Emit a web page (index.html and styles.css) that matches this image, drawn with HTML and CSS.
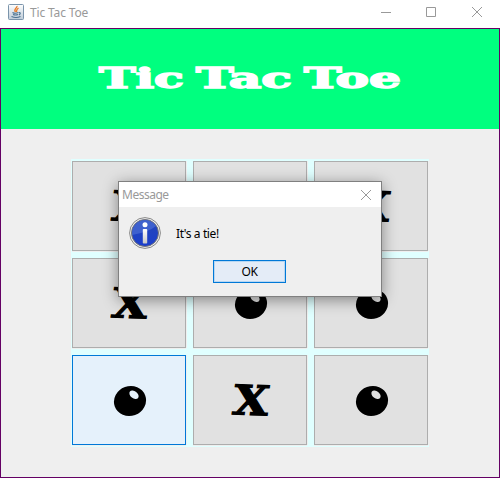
FILE: index.html
```
<!DOCTYPE html>
<html lang="en">
<head>
<meta charset="utf-8">
<title>Tic Tac Toe</title>
<link rel="stylesheet" href="styles.css">
</head>
<body>
<svg width="0" height="0" class="defs">
  <defs>
    <symbol id="mark-x" viewBox="0 0 40 36">
      <text class="x-text" x="1" y="32" textLength="36" lengthAdjust="spacingAndGlyphs" transform="translate(3 0) skewX(-6) rotate(2 20 18)">X</text>
    </symbol>
    <symbol id="mark-o" viewBox="0 0 40 36">
      <ellipse cx="20" cy="18" rx="16.2" ry="14.8" transform="rotate(-20 20 18)"/>
      <ellipse class="glint" cx="24" cy="11.8" rx="5.2" ry="3.5" transform="rotate(38 24 11.8)"/>
    </symbol>
  </defs>
</svg>
<div class="window">
  <header class="titlebar">
    <svg class="java" width="16" height="16" viewBox="0 0 16 16">
      <defs><linearGradient id="jb" x2="0" y2="1"><stop stop-color="#fff"/><stop offset="1" stop-color="#bdcbd8"/></linearGradient></defs>
      <rect x=".5" y=".5" width="15" height="15" rx="1" fill="url(#jb)" stroke="#7b94ab"/>
      <path d="M9 2C9.5 4 5 5 7.5 8M10.500 4C8 5.500 9 6 8.500 8" fill="none" stroke="#e87920" stroke-width="1.300"/>
      <path d="M4.500 8.500Q7 10 10.500 8.500M5 10.500Q7.500 11.500 10 10.500M11 8.500Q13.500 8.500 11 11M3.500 12.500Q8 14.500 12.500 12.500" fill="none" stroke="#4b7190" stroke-width="1.200"/>
    </svg>
    <span class="caption">Tic Tac Toe</span>
    <svg class="controls" width="102" height="12" viewBox="0 0 102 12" fill="none" stroke="#999">
      <path d="M0 6.500H10M45.500 1.500H54.500V10.500H45.500ZM91 1L101 11M101 1L91 11"/>
    </svg>
  </header>
  <main class="content">
    <div class="banner">
      <svg width="310" height="40" viewBox="0 0 310 40" class="heading">
        <text x="4" y="27" textLength="85" lengthAdjust="spacingAndGlyphs">Tic</text>
        <text x="101" y="27" textLength="96" lengthAdjust="spacingAndGlyphs">Tac</text>
        <text x="209" y="27" textLength="97" lengthAdjust="spacingAndGlyphs">Toe</text>
      </svg>
    </div>
    <div class="board">
      <button class="cell"><svg class="mark"><use href="#mark-x"/></svg></button>
      <button class="cell"></button>
      <button class="cell"><svg class="mark"><use href="#mark-x"/></svg></button>
      <button class="cell"><svg class="mark"><use href="#mark-x"/></svg></button>
      <button class="cell"><svg class="mark"><use href="#mark-o"/></svg></button>
      <button class="cell"><svg class="mark"><use href="#mark-o"/></svg></button>
      <button class="cell active"><svg class="mark"><use href="#mark-o"/></svg></button>
      <button class="cell"><svg class="mark"><use href="#mark-x"/></svg></button>
      <button class="cell"><svg class="mark"><use href="#mark-o"/></svg></button>
    </div>
  </main>
  <section class="dialog">
    <div class="dialog-title">
      <span>Message</span>
      <svg width="12" height="12" viewBox="0 0 12 12" stroke="#999"><path d="M1 1L11 11M11 1L1 11"/></svg>
    </div>
    <div class="message">
      <svg width="32" height="32" viewBox="0 0 32 32">
        <defs>
          <linearGradient id="ib" x2="0" y2="1"><stop stop-color="#2446b8"/><stop offset="1" stop-color="#1c3fcc"/></linearGradient>
          <linearGradient id="is" x2="0" y2="1"><stop stop-color="#fff"/><stop offset="1" stop-color="#c8c8c8"/></linearGradient>
        </defs>
        <circle cx="16" cy="16" r="15.400" fill="#eee" stroke="#888"/>
        <circle cx="16" cy="16" r="13.500" fill="url(#ib)" stroke="#777"/>
        <path d="M3 16A13 13 0 0 1 27 9Q20 15 3 18Z" fill="#4668d2" opacity=".8"/>
        <circle cx="16" cy="7.800" r="2.500" fill="#fff"/>
        <rect x="13.800" y="12" width="4.400" height="14.500" rx=".8" fill="url(#is)"/>
      </svg>
      <span>It's a tie!</span>
    </div>
    <button class="ok">OK</button>
  </section>
</div>
</body>
</html>
```
FILE: styles.css
```
* { box-sizing: border-box; }
body { margin: 0; background: #fff; font: 12px "Noto Sans", sans-serif; }
button { padding: 0; font: inherit; color: #000; }
.defs { position: absolute; }
.window { position: relative; width: 500px; height: 478px; }
.titlebar { display: flex; align-items: center; height: 28px; padding: 0 17px 4px 8px; color: #999; }
.caption { flex: 1; margin-left: 6px; padding-top: 2px; line-height: 16px; letter-spacing: -.15px; }
.java, .controls { display: block; }
.content { height: 450px; border: 1px solid #640064; background: #efefef; }
.banner { display: flex; justify-content: center; height: 100px; padding-top: 32px; background: #00ff7f; }
.heading text { font: bold 27px "DejaVu Serif", serif; fill: #fff; stroke: #fff; stroke-width: 1.4px; }
.board { display: grid; grid-template-columns: repeat(3, 114px); grid-auto-rows: 90px; gap: 7px; width: 358px; height: 288px; margin: 30px 0 0 70px; padding: 2px 1px; background: #e0ffff; }
.cell { display: flex; align-items: center; justify-content: center; padding: 2px 0 0 2px; border: 1px solid #adadad; background: #e1e1e1; box-shadow: 0 1px #efefef, 1px 0 #efefef; }
.active { border-color: #0078d7; background: #e5f1fb; }
.mark { width: 40px; height: 36px; }
.x-text { font: bold 41px "DejaVu Serif", serif; stroke: #000; stroke-width: 1.2px; }
.active .mark { --glint: #e5f1fb; }
.glint { fill: var(--glint, #e1e1e1); }
.dialog { position: absolute; left: 118px; top: 181px; width: 264px; height: 116px; border: 1px solid #808080; background: #efefef; box-shadow: 0 3px 14px rgba(0,0,0,.42); }
.dialog-title { display: flex; align-items: center; justify-content: space-between; height: 25px; padding: 0 9px 0 3px; background: #fff; color: #999; letter-spacing: -.5px; }
.dialog-title span { padding-bottom: 1px; }
.message { display: flex; align-items: center; gap: 15px; height: 32px; margin: 10px 0 0 10px; letter-spacing: -.4px; }
.ok { display: block; width: 73px; height: 23px; margin: 11px 0 0 94px; border: 1px solid #0078d7; background: #e4ecf7; box-shadow: inset 0 0 0 1px #b8d7f2; letter-spacing: -.4px; }
```
